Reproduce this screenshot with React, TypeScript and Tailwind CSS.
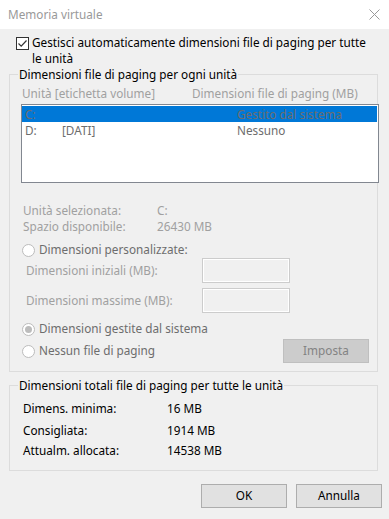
import React from 'react';

// --- small controls ---

const CheckBox = () => (
    <div className="w-[13px] h-[13px] border border-[#333333] bg-white flex items-center justify-center shrink-0">
        <svg width="11" height="11" viewBox="0 0 11 11">
            <path d="M1.5 5.5 L4.2 8.2 L9.5 2.5" fill="none" stroke="#333333" strokeWidth="1.2" />
        </svg>
    </div>
);

const Radio = ({ checked = false }: { checked?: boolean }) => (
    <div className="w-[13px] h-[13px] rounded-full border border-[#bcbcbc] bg-white flex items-center justify-center shrink-0">
        {checked && <div className="w-[7px] h-[7px] rounded-full bg-[#bcbcbc]" />}
    </div>
);

const DisabledInput = () => (
    <div className="w-[88px] h-[25px] border border-[#cccccc] bg-[#f0f0f0] shadow-[inset_0_0_0_1px_#ffffff]" />
);

const GroupBox = ({ title, className, children }: { title: string; className?: string; children: React.ReactNode }) => (
    <fieldset className={`min-w-0 border border-[#dcdcdc] px-0 m-0 ${className ?? ''}`}>
        <legend className="ml-[8px] px-[1px] text-black leading-[16px]">{title}</legend>
        {children}
    </fieldset>
);

const drives = [
    { letter: 'C:', label: '', size: 'Gestito dal sistema', selected: true },
    { letter: 'D:', label: '[DATI]', size: 'Nessuno', selected: false },
];

export default function App() {
    return (
        <div className="w-[389px] h-[519px] bg-white text-[11.75px] font-['Noto_Sans',sans-serif] select-none overflow-hidden">
            {/* title bar */}
            <div className="h-[29px] flex items-center justify-between pl-[8px] pr-[9px]">
                <span className="text-[#999999]">Memoria virtuale</span>
                <svg width="11" height="11" viewBox="0 0 11 11">
                    <path d="M0.5 0.5 L10.5 10.5 M10.5 0.5 L0.5 10.5" stroke="#999999" strokeWidth="1" />
                </svg>
            </div>

            <div className="h-[490px] bg-[#f0f0f0] pl-[9px] pr-[11px]">
                {/* auto manage */}
                <div className="flex items-start pt-[5px] pl-[7px] gap-[3px] leading-[16px] text-black">
                    <div className="pt-[3px]">
                        <CheckBox />
                    </div>
                    <span>
                        Gestisci automaticamente dimensioni file di paging per tutte
                        <br />
                        le unità
                    </span>
                </div>

                <GroupBox title="Dimensioni file di paging per ogni unità" className="pb-[8px]">
                    <div className="flex pt-[3px] pl-[12px] leading-[16px] text-[#a0a0a0]">
                        <span className="w-[170px]">Unità [etichetta volume]</span>
                        <span>Dimensioni file di paging (MB)</span>
                    </div>

                    <div className="mt-[3px] ml-[11px] w-[358px] h-[79px] border border-[#828790] bg-white pt-[1px] pr-[1px]">
                        {drives.map((d) => (
                            <div
                                key={d.letter}
                                className={`flex items-center h-[16px] leading-[16px] text-[#6d6d6d] ${d.selected ? 'bg-[#0078d7]' : ''}`}
                            >
                                <span className="pl-[3px] w-[40px]">{d.letter}</span>
                                <span className="w-[175px]">{d.label}</span>
                                <span>{d.size}</span>
                            </div>
                        ))}
                    </div>

                    <div className="mt-[19px] pl-[13px] text-[#a0a0a0] leading-[16px]">
                        <div className="flex">
                            <span className="w-[134px]">Unità selezionata:</span>
                            <span>C:</span>
                        </div>
                        <div className="flex">
                            <span className="w-[134px]">Spazio disponibile:</span>
                            <span>26430 MB</span>
                        </div>
                    </div>

                    <div className="mt-[8px] pl-[12px] flex items-center gap-[4px] h-[16px] text-[#6d6d6d]">
                        <Radio />
                        <span>Dimensioni personalizzate:</span>
                    </div>

                    <div className="pl-[16px] pr-[87px] text-[#a0a0a0]">
                        <div className="flex items-center justify-between h-[25px]">
                            <span>Dimensioni iniziali (MB):</span>
                            <DisabledInput />
                        </div>
                        <div className="flex items-center justify-between h-[25px] mt-[5px]">
                            <span>Dimensioni massime (MB):</span>
                            <DisabledInput />
                        </div>
                    </div>

                    <div className="mt-[8px] pl-[12px] flex items-center gap-[4px] h-[16px] text-[#6d6d6d]">
                        <Radio checked />
                        <span>Dimensioni gestite dal sistema</span>
                    </div>

                    <div className="mt-[2px] pl-[12px] pr-[8px] flex items-center justify-between h-[24px] text-[#6d6d6d]">
                        <div className="flex items-center gap-[4px]">
                            <Radio />
                            <span>Nessun file di paging</span>
                        </div>
                        <div className="w-[86px] h-[24px] border border-[#bfbfbf] bg-[#cccccc] text-[#838383] flex items-center justify-center">
                            Imposta
                        </div>
                    </div>
                </GroupBox>

                <GroupBox title="Dimensioni totali file di paging per tutte le unità" className="mt-[5px] pb-[12px]">
                    <div className="pl-[13px] pt-[7px] text-black leading-[16px]">
                        <div className="flex">
                            <span className="w-[144px]">Dimens. minima:</span>
                            <span>16 MB</span>
                        </div>
                        <div className="flex mt-[6px]">
                            <span className="w-[144px]">Consigliata:</span>
                            <span>1914 MB</span>
                        </div>
                        <div className="flex mt-[4px]">
                            <span className="w-[144px]">Attualm. allocata:</span>
                            <span>14538 MB</span>
                        </div>
                    </div>
                </GroupBox>

                {/* dialog buttons */}
                <div className="mt-[13px] flex justify-end gap-[9px] -mr-[4px]">
                    <button className="w-[86px] h-[24px] border border-[#adadad] bg-[#e1e1e1] text-black">OK</button>
                    <button className="w-[86px] h-[24px] border border-[#adadad] bg-[#e1e1e1] text-black">Annulla</button>
                </div>
            </div>
        </div>
    );
}
